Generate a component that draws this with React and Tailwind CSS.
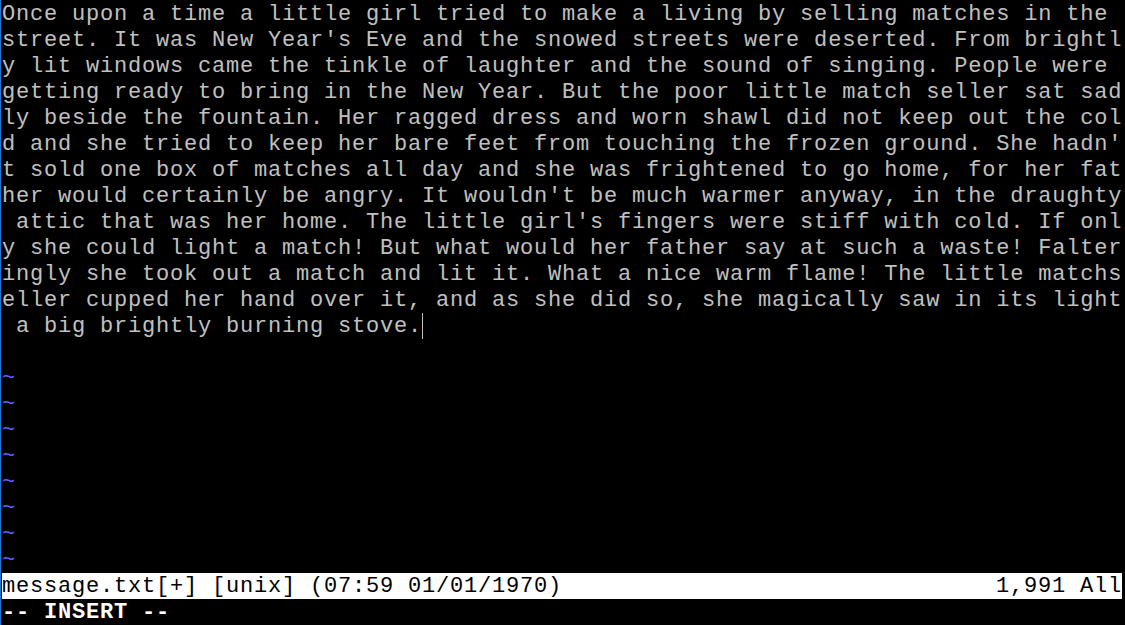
const LINES = [
  "Once upon a time a little girl tried to make a living by selling matches in the ",
  "street. It was New Year's Eve and the snowed streets were deserted. From brightl",
  "y lit windows came the tinkle of laughter and the sound of singing. People were ",
  "getting ready to bring in the New Year. But the poor little match seller sat sad",
  "ly beside the fountain. Her ragged dress and worn shawl did not keep out the col",
  "d and she tried to keep her bare feet from touching the frozen ground. She hadn'",
  "t sold one box of matches all day and she was frightened to go home, for her fat",
  "her would certainly be angry. It wouldn't be much warmer anyway, in the draughty",
  " attic that was her home. The little girl's fingers were stiff with cold. If onl",
  "y she could light a match! But what would her father say at such a waste! Falter",
  "ingly she took out a match and lit it. What a nice warm flame! The little matchs",
  "eller cupped her hand over it, and as she did so, she magically saw in its light",
]

const TILDES = 8

export default function App() {
  return (
    <div className="w-[1125px] h-[625px] bg-black flex overflow-hidden font-['Liberation_Mono',monospace] text-[22px] tracking-[0.8px] leading-[27px]">
      <div className="w-px h-full bg-[#1a78d6]" />
      <div className="w-[1120px] ml-px pt-px flex flex-col">
        {LINES.map((l, i) => (
          <div key={i} className="h-[26px] shrink-0 whitespace-pre text-[#c0c0c0]">{l}</div>
        ))}
        <div className="h-[26px] shrink-0 whitespace-pre text-[#c0c0c0] flex">
          <span> a big brightly burning stove.</span>
          <span className="w-px h-[26px] bg-[#c0c0c0]" />
        </div>
        <div className="h-[26px] shrink-0" />
        {Array.from({ length: TILDES }).map((_, i) => (
          <div key={i} className="h-[26px] shrink-0 text-[#5f5fff]">~</div>
        ))}
        <div className="h-[26px] shrink-0 bg-white text-black flex justify-between whitespace-pre overflow-hidden">
          <span>message.txt[+] [unix] (07:59 01/01/1970)</span>
          <span>1,991 All</span>
        </div>
        <div className="h-[26px] shrink-0 text-white font-bold whitespace-pre">-- INSERT --</div>
      </div>
    </div>
  )
}
